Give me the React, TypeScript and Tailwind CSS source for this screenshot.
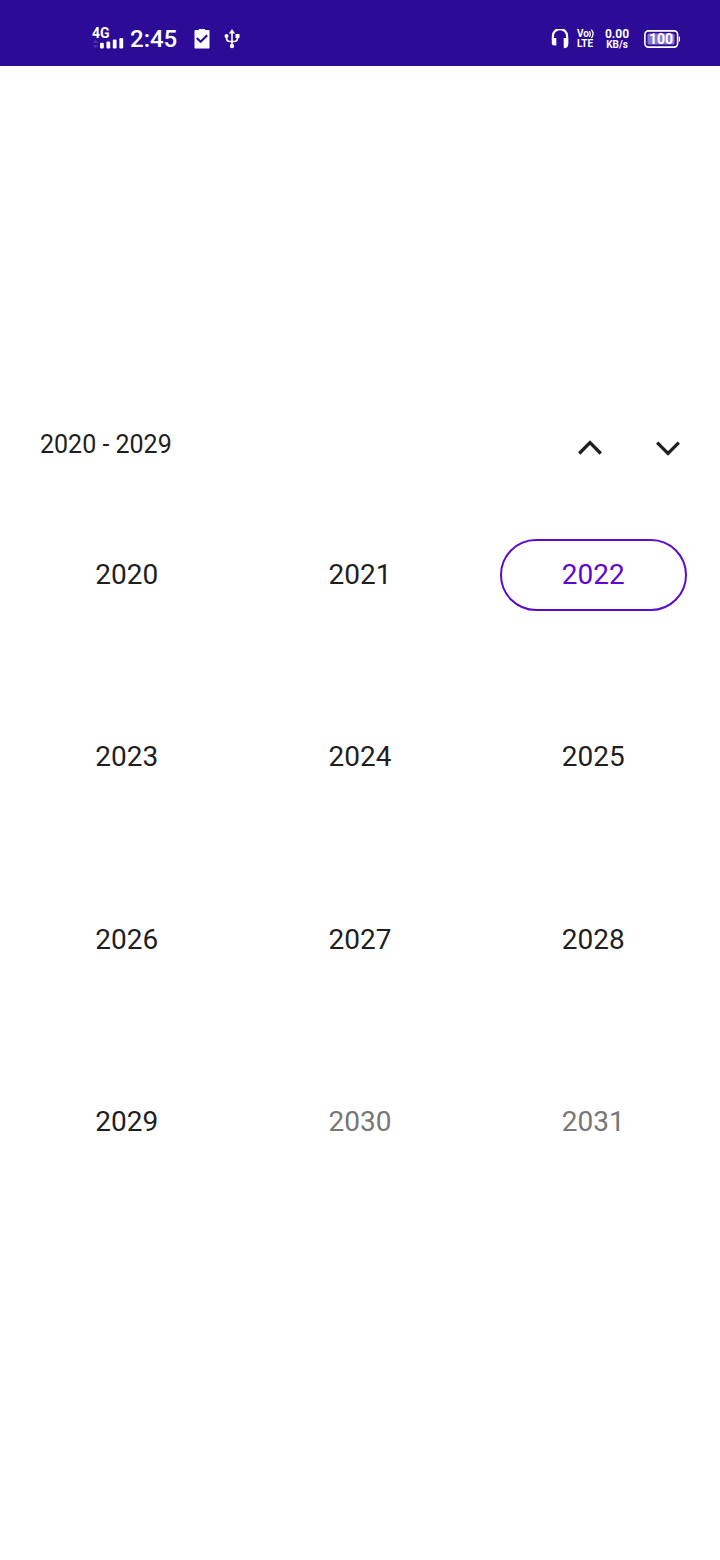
import { useState } from "react";

function SignalIcon() {
  return (
    <svg viewBox="0 0 34 12" className="h-3 w-[34px]" aria-hidden="true">
      <path d="M0.5 5 3.5 1.5 6.5 5zM0.5 7h6L3.5 10.500z" fill="#4a2fad" />
      <g fill="#fff">
        <rect x="8" y="4.700" width="3.800" height="5.800" rx="1.200" />
        <rect x="14.400" y="3.500" width="3.800" height="7" rx="1.200" />
        <rect x="20.800" y="1.500" width="3.800" height="9" rx="1.200" />
        <rect x="27.400" y="0" width="3.800" height="10.500" rx="1.200" />
      </g>
    </svg>
  );
}

function ClipboardIcon() {
  return (
    <svg viewBox="0 0 16 20" className="h-5 w-4" aria-hidden="true">
      <path d="M0.5 1.800a0.800 0.800 0 0 1 .8-.8H4.800q.4-1.500 1.700-1.500h3q1.300 0 1.700 1.500h3.500a.8.8 0 0 1 .8.8v17a.7.7 0 0 1-.7.700h-13.600a.7.7 0 0 1-.7-.700z" fill="#fff" />
      <path d="M2.800 9 6.600 12.700 13.200 6.200" fill="none" stroke="#2c0b97" strokeWidth="2.200" />
    </svg>
  );
}

function UsbIcon() {
  return (
    <svg viewBox="0 0 16 20" className="h-5 w-4" aria-hidden="true">
      <path d="M8 3v14M2.5 7v2.300q0 3.200 3.200 3.200h4.600q3.200 0 3.200-3.200V7" fill="none" stroke="#fff" strokeWidth="1.600" />
      <g fill="#fff">
        <path d="M8 0l3.200 4.500H4.800z" />
        <circle cx="2.500" cy="7" r="2" />
        <rect x="11.500" y="5" width="4" height="4" />
        <circle cx="8" cy="17" r="2.200" />
      </g>
    </svg>
  );
}

function HeadphonesIcon() {
  return (
    <svg viewBox="0 0 18 20" className="h-5 w-[18px]" aria-hidden="true">
      <path d="M1.900 10.500V7a7 6.800 0 0 1 14.200 0v8.500q0 2.600-3.300 2.700" fill="none" stroke="#fff" strokeWidth="2.200" />
      <path d="M0.800 9H5.300v7.500H3.300a2.500 2.500 0 0 1-2.500-2.500zM12.700 9h4.500V14.500a2.500 2.500 0 0 1-2.500 2.500h-2z" fill="#fff" />
    </svg>
  );
}

function WavesIcon() {
  return (
    <svg viewBox="0 0 6 10" className="h-[10px] w-[6px]" fill="none" stroke="#fff" strokeWidth="1.300" aria-hidden="true">
      <path d="M0.300 2q1.900 2.800 0 6M2.400 0.600q3.400 4.200 0 8.600" />
    </svg>
  );
}

function BatteryIcon() {
  return (
    <svg viewBox="0 0 37 18" className="h-[18px] w-[37px]" aria-hidden="true">
      <rect x="0.900" y="0.900" width="32.700" height="16.200" rx="3.500" fill="none" stroke="#fff" strokeWidth="1.600" />
      <rect x="3.500" y="3.500" width="27" height="11" rx="1.500" fill="#8577cf" />
      <rect x="34.800" y="6.500" width="1.200" height="5" rx="0.500" fill="#fff" />
      <text x="17" y="14" textAnchor="middle" fontFamily="Roboto, sans-serif" fontWeight="700" fontSize="14" fill="#fff">
        100
      </text>
    </svg>
  );
}

function StatusBar() {
  return (
    <header className="flex h-[66px] items-center justify-between bg-[#2c0b97] pt-3 pr-[39px] pl-[92px] text-white">
      <div className="flex items-center">
        <div className="flex w-[38px] flex-col">
          <span className="text-sm leading-[9px] font-bold">4G</span>
          <SignalIcon />
        </div>
        <span className="text-2xl leading-6 font-medium">2:45</span>
        <div className="ml-[17px] flex gap-[14px]">
          <ClipboardIcon />
          <UsbIcon />
        </div>
      </div>
      <div className="flex items-center">
        <HeadphonesIcon />
        <div className="ml-2 flex w-[28px] flex-col text-[10px] leading-[10px] font-bold">
          <span className="flex items-center">
            Vo
            <WavesIcon />
          </span>
          <span>LTE</span>
        </div>
        <div className="flex w-6 flex-col items-center font-bold">
          <span className="text-xs leading-[11px]">0.00</span>
          <span className="text-[10px] leading-[10px]">KB/s</span>
        </div>
        <div className="ml-[15px]">
          <BatteryIcon />
        </div>
      </div>
    </header>
  );
}

function Chevron({ up = false }: { up?: boolean }) {
  return (
    <svg viewBox="0 0 24 16" className="h-4 w-6" fill="none" stroke="#1f1f1f" strokeWidth="3.300" aria-hidden="true">
      <path d={up ? "M1.200 13.500 12 2.700 22.800 13.500" : "M1.200 2.700 12 13.500 22.800 2.700"} />
    </svg>
  );
}

export default function App() {
  const [start, setStart] = useState(2020);
  const [selected, setSelected] = useState(2022);
  const years = Array.from({ length: 12 }, (_, i) => start + i);

  return (
    <div className="min-h-screen bg-white font-['Roboto',sans-serif] text-[#1f1f1f]">
      <StatusBar />
      <main className="pt-[355px]">
        <div className="flex h-[63px] items-start justify-between px-10">
          <h1 className="pt-2 text-[25px] leading-8">{start} - {start + 9}</h1>
          <div className="flex gap-[54px] pt-[19px]">
            <button type="button" aria-label="Previous decade" onClick={() => setStart(start - 10)}>
              <Chevron up />
            </button>
            <button type="button" aria-label="Next decade" onClick={() => setStart(start + 10)}>
              <Chevron />
            </button>
          </div>
        </div>
        <div className="grid h-[729px] grid-cols-3 grid-rows-4 px-[10px]">
          {years.map((year, i) => (
            <div key={year} className="flex items-center justify-center">
              <button
                type="button"
                aria-pressed={year === selected}
                onClick={() => setSelected(year)}
                className={`h-[72px] w-4/5 rounded-full border-2 text-[28px] leading-8 ${
                  year === selected
                    ? "border-[#5b0ac9] text-[#5f06d6]"
                    : i > 9
                      ? "border-transparent text-[#777777]"
                      : "border-transparent"
                }`}
              >
                {year}
              </button>
            </div>
          ))}
        </div>
      </main>
    </div>
  );
}
